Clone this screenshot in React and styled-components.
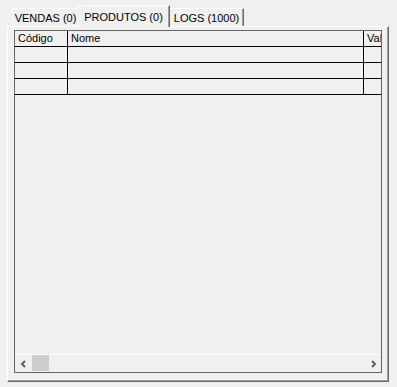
import React from "react";
import styled, { createGlobalStyle } from "styled-components";

const GlobalStyle = createGlobalStyle`
  html, body {
    margin: 0;
    padding: 0;
    background: #f0f0f0;
  }
  body {
    font-family: "Liberation Sans", Arial, sans-serif;
    font-size: 11px;
    color: #000;
  }
`;

const tabs = [
  { label: "VENDAS (0)", width: 67 },
  { label: "PRODUTOS (0)", width: 93, active: true },
  { label: "LOGS (1000)", width: 75 },
];

const columns = [
  { label: "Código", width: 53 },
  { label: "Nome", width: 296 },
  { label: "Val", width: 60 },
];

const rows = [0, 1, 2];

export default function App() {
  return (
    <Window>
      <GlobalStyle />
      <TabStrip>
        {tabs.map((t) => (
          <Tab key={t.label} $active={t.active} $width={t.width}>
            {t.label}
          </Tab>
        ))}
      </TabStrip>
      <Panel>
        <Grid>
          <TableArea>
            <Row>
              {columns.map((c) => (
                <Cell key={c.label} $width={c.width}>
                  {c.label}
                </Cell>
              ))}
            </Row>
            {rows.map((r) => (
              <Row key={r}>
                {columns.map((c) => (
                  <Cell key={c.label} $width={c.width} />
                ))}
              </Row>
            ))}
          </TableArea>
          <ScrollBar>
            <ArrowButton>
              <svg width="8" height="8" viewBox="0 0 8 8">
                <path d="M5 1 L2 4 L5 7" stroke="#606060" strokeWidth="2" fill="none" />
              </svg>
            </ArrowButton>
            <Thumb />
            <Track />
            <ArrowButton>
              <svg width="8" height="8" viewBox="0 0 8 8">
                <path d="M3 1 L6 4 L3 7" stroke="#606060" strokeWidth="2" fill="none" />
              </svg>
            </ArrowButton>
          </ScrollBar>
        </Grid>
      </Panel>
    </Window>
  );
}

const Window = styled.div`
  width: 397px;
  height: 387px;
  box-sizing: border-box;
  padding: 5px 0 0 7px;
  background: #f0f0f0;
  overflow: hidden;
`;

const TabStrip = styled.div`
  display: flex;
  align-items: flex-end;
  height: 21px;
  padding-left: 5px;
  position: relative;
  z-index: 1;
`;

const Tab = styled.div`
  box-sizing: border-box;
  width: ${(p) => p.$width}px;
  height: ${(p) => (p.$active ? "22px" : "18px")};
  margin: ${(p) => (p.$active ? "0 -1px -1px -2px" : "0")};
  padding-top: ${(p) => (p.$active ? "4px" : "2px")};
  text-align: center;
  background: #f0f0f0;
  border-top: 1px solid #fff;
  border-left: 1px solid #fff;
  border-right: 1px solid #696969;
  box-shadow: inset -1px 0 0 #a0a0a0;
  white-space: nowrap;
  line-height: 14px;
  position: relative;
  z-index: ${(p) => (p.$active ? 2 : 1)};
`;

const Panel = styled.div`
  box-sizing: border-box;
  width: 382px;
  height: 356px;
  border-top: 1px solid #fff;
  border-left: 1px solid #fff;
  border-right: 1px solid #696969;
  border-bottom: 1px solid #696969;
  box-shadow: inset -1px -1px 0 #a0a0a0;
  padding: 3px 6px 0 6px;
`;

const Grid = styled.div`
  box-sizing: border-box;
  width: 368px;
  height: 343px;
  border: 1px solid #646464;
  display: flex;
  flex-direction: column;
  background: #f0f0f0;
`;

const TableArea = styled.div`
  flex: 1;
  overflow: hidden;
`;

const Row = styled.div`
  display: flex;
  height: 16px;
  border-bottom: 1px solid #000;
  box-sizing: border-box;
  width: 420px;
`;

const Cell = styled.div`
  box-sizing: border-box;
  flex: none;
  width: ${(p) => p.$width}px;
  border-right: 1px solid #000;
  padding-left: 3px;
  line-height: 15px;
  white-space: nowrap;
  overflow: hidden;
`;

const ScrollBar = styled.div`
  display: flex;
  height: 17px;
  border-top: 1px solid #fff;
  background: #f0f0f0;
`;

const ArrowButton = styled.div`
  width: 17px;
  height: 17px;
  display: flex;
  align-items: center;
  justify-content: center;
`;

const Thumb = styled.div`
  width: 17px;
  height: 16px;
  background: #cdcdcd;
`;

const Track = styled.div`
  flex: 1;
`;
